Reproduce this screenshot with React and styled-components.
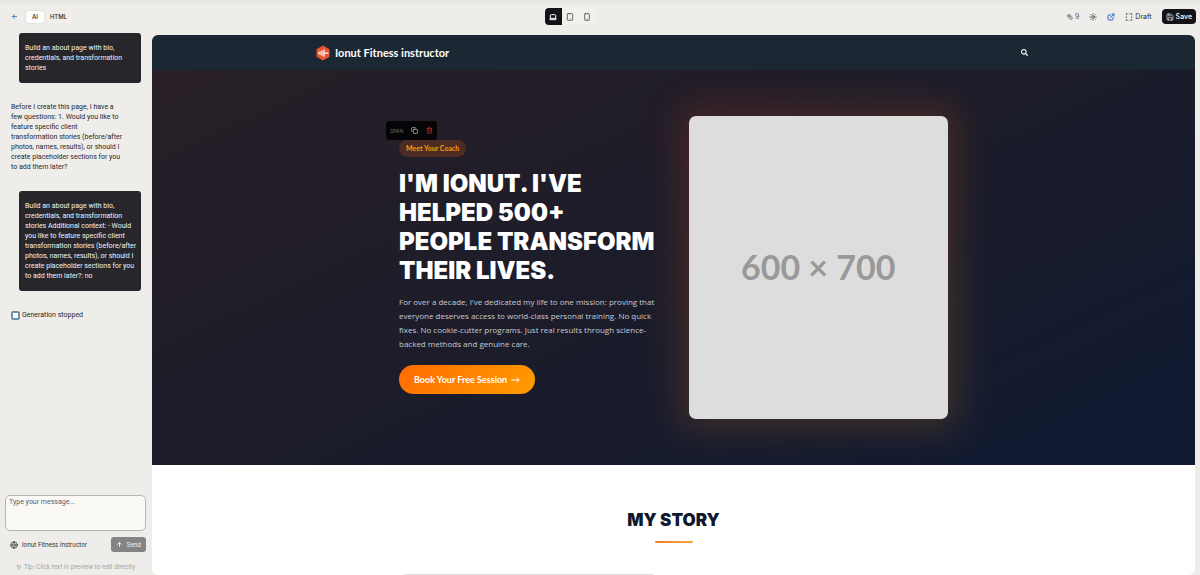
import React from 'react';
import styled, {createGlobalStyle} from 'styled-components';
import {
    ArrowLeft, ArrowUp, Laptop, Tablet, Smartphone, Coins, Sun, ExternalLink,
    Save, Copy, Trash2, Globe, MousePointer2
} from 'lucide-react';
import {FaSearch} from 'react-icons/fa';

const PLACEHOLDER = 'Type your message...';

const MESSAGES = [
    {
        own: true,
        lines: ['Build an about page with bio,', 'credentials, and transformation', 'stories']
    },
    {
        own: false,
        lines: [
            'Before I create this page, I have a',
            'few questions: 1. Would you like to',
            'feature specific client',
            'transformation stories (before/after',
            'photos, names, results), or should I',
            'create placeholder sections for you',
            'to add them later?',
        ]
    },
    {
        own: true,
        lines: [
            'Build an about page with bio,',
            'credentials, and transformation',
            'stories Additional context: - Would',
            'you like to feature specific client',
            'transformation stories (before/after',
            'photos, names, results), or should I',
            'create placeholder sections for you',
            'to add them later?: no',
        ]
    },
];

const HEADLINE = ["I'm Ionut. I've", 'helped 500+', 'people transform', 'their lives.'];

const BIO = [
    "For over a decade, I've dedicated my life to one mission: proving that",
    'everyone deserves access to world-class personal training. No quick',
    'fixes. No cookie-cutter programs. Just real results through science-',
    'backed methods and genuine care.',
];

const GlobalStyle = createGlobalStyle`
    * {
        box-sizing: border-box;
    }

    body {
        margin: 0;
        background: #eeedea;
        color: #27272a;
        font-family: Inter, sans-serif;
        font-size: 6px;
        line-height: 10px;
    }

    button, textarea {
        margin: 0;
        padding: 0;
        border: none;
        background: none;
        color: inherit;
        font: inherit;
    }

    button {
        cursor: pointer;
    }

    svg {
        display: block;
        flex: none;
    }
`;

const Page = styled.div`
    display: flex;
    flex-direction: column;
    height: 100vh;
    overflow: hidden;
    background: linear-gradient(#e4e3e0, #eeedea 6px);
`;

const Toolbar = styled.header`
    display: flex;
    align-items: center;
    justify-content: space-between;
    flex: none;
    height: 35px;
    padding: 0 4px 2px 11px;
`;

const ToolbarSide = styled.div`
    display: flex;
    align-items: center;
    gap: ${({$wide}) => $wide ? '10px' : '8px'};
`;

const IconButton = styled.button`
    display: flex;
    align-items: center;
    gap: 2px;
    color: ${({$color}) => $color || '#27272a'};
    font-size: 7px;
`;

const Tabs = styled.div`
    display: flex;
    border-radius: 3px;
    background: #f0efec;
`;

const Tab = styled.button`
    height: 12px;
    padding: 0 6px;
    border-radius: 3px;
    font-weight: 500;
    background: ${({$active}) => $active ? '#fefefd' : 'transparent'};
    box-shadow: ${({$active}) => $active ? '0 0 2px rgba(0, 0, 0, 0.15)' : 'none'};
`;

const Devices = styled.div`
    display: flex;
    overflow: hidden;
    border-radius: 4px;
    background: #f1f0ed;
`;

const Device = styled.button`
    display: grid;
    place-items: center;
    width: 17px;
    height: 17px;
    color: ${({$active}) => $active ? '#fff' : '#27272a'};
    background: ${({$active}) => $active ? '#121217' : 'transparent'};
`;

const SaveButton = styled.button`
    display: flex;
    align-items: center;
    gap: 2px;
    height: 15px;
    padding: 0 4px;
    border-radius: 4px;
    color: #fff;
    background: #121217;
    font-size: 7px;
    font-weight: 500;
`;

const Body = styled.div`
    display: flex;
    flex: 1;
    min-height: 0;
`;

const Sidebar = styled.aside`
    display: flex;
    flex-direction: column;
    flex: none;
    width: 152px;
    padding: 0 6px 3px 5px;
`;

const Messages = styled.div`
    display: flex;
    flex-direction: column;
    gap: 9px;
    flex: 1;
    margin-top: -2px;
    padding-right: 5px;
    font-family: Roboto, sans-serif;
    font-size: 7px;
`;

const Message = styled.p`
    margin: 0 ${({$own}) => $own ? '0 0 14px' : '14px 0 0'};
    padding: 10px 0 10px 6px;
    border-radius: 3px;
    color: ${({$own}) => $own ? '#f4f4f5' : '#27272a'};
    background: ${({$own}) => $own ? '#26262b' : 'transparent'};
    white-space: nowrap;
`;

const Status = styled.p`
    display: flex;
    align-items: center;
    gap: 2px;
    margin: 0;
    padding: 10px 6px;
`;

const StopMark = styled.span`
    width: 9px;
    height: 9px;
    border: 2px solid #6a8fb2;
    border-radius: 2px;
    background: #fff;
`;

const Composer = styled.form`
    display: flex;
    flex-direction: column;
    gap: 6px;
`;

const MessageInput = styled.textarea`
    display: block;
    width: 100%;
    height: 36px;
    padding: 1px 3px;
    border: 1px solid #b5b5b3;
    border-radius: 5px;
    background: #faf9f6;
    font-family: Roboto, sans-serif;
    font-size: 7px;
    resize: none;

    &::placeholder {
        color: #606067;
    }
`;

const ComposerRow = styled.div`
    display: flex;
    align-items: center;
    justify-content: space-between;
`;

const Site = styled.span`
    display: flex;
    align-items: center;
    gap: 4px;
    padding-left: 5px;
`;

const SendButton = styled.button`
    display: flex;
    align-items: center;
    gap: 3px;
    height: 15px;
    padding: 0 5px;
    border-radius: 3px;
    color: #f4f4f5;
    background: #858484;
`;

const Tip = styled.p`
    display: flex;
    align-items: center;
    justify-content: center;
    gap: 2px;
    margin: 10px 0 0;
    color: #a1a1a0;
`;

const Preview = styled.main`
    flex: 1;
    min-width: 0;
    margin-right: 5px;
    overflow: hidden;
    border-radius: 6px;
    background: #fff;
    font-family: Lato, sans-serif;
`;

const SiteHeader = styled.header`
    height: 35px;
    background: #1b2834;
`;

const SiteNav = styled.nav`
    display: flex;
    align-items: center;
    justify-content: space-between;
    max-width: 715px;
    height: 100%;
    margin: 0 auto;
    padding-right: 3px;
    color: #fff;
`;

const Brand = styled.a`
    display: flex;
    align-items: center;
    gap: 5px;
    color: #fff;
    font-size: 11px;
    font-weight: 700;
    text-decoration: none;
`;

const Hero = styled.section`
    padding: 46px 0;
    background: linear-gradient(155deg, #281f27 0%, #1c1c2a 50%, #0f1a33 100%);
`;

const HeroGrid = styled.div`
    display: grid;
    grid-template-columns: 1fr 1fr;
    align-items: center;
    gap: 30px;
    max-width: 549px;
    margin: 0 auto;
`;

const HeroText = styled.div`
    display: flex;
    flex-direction: column;
    align-items: flex-start;
    min-width: 0;
    white-space: nowrap;
`;

const BadgeWrap = styled.div`
    position: relative;
`;

const Badge = styled.span`
    display: block;
    height: 17px;
    padding: 0 7px;
    border-radius: 9px;
    color: #ff9a0d;
    background: #4d2c23;
    font-size: 7px;
    font-weight: 700;
    line-height: 17px;
`;

const ElementTools = styled.div`
    position: absolute;
    bottom: 100%;
    left: -13px;
    display: flex;
    align-items: center;
    gap: 8px;
    height: 19px;
    padding: 0 4px;
    border-radius: 3px;
    color: #6b6b70;
    background: #050507;
    font-family: Inter, sans-serif;
    font-size: 5px;
`;

const Headline = styled.h1`
    margin: 12px 0 10px;
    color: #fff;
    font-family: Inter, sans-serif;
    font-size: 24px;
    font-weight: 900;
    line-height: 29px;
    text-transform: uppercase;
`;

const Bio = styled.p`
    margin: 0 0 14px;
    color: #c5cbd6;
    font-family: "Open Sans", sans-serif;
    font-size: 8px;
    line-height: 14px;
`;

const Line = styled.span`
    display: block;
`;

const BookLink = styled.a`
    display: flex;
    align-items: center;
    gap: 4px;
    height: 29px;
    padding: 0 15px;
    border-radius: 15px;
    color: #fff;
    background: linear-gradient(135deg, #ff6b00, #ff9d00);
    font-size: 9px;
    font-weight: 700;
    text-decoration: none;
`;

const Portrait = styled.div`
    position: relative;

    &::before {
        content: '';
        position: absolute;
        inset: -10px;
        background: linear-gradient(135deg, #ff4d1a, #ff9d00);
        opacity: 0.17;
        filter: blur(18px);
    }
`;

const PortraitImage = styled.div`
    position: relative;
    display: grid;
    place-items: center;
    aspect-ratio: 6 / 7;
    border-radius: 7px;
    color: #999;
    background: #ddd;
    font-size: 34px;
    font-weight: 700;
`;

const Story = styled.section`
    display: flex;
    flex-direction: column;
    align-items: center;
    padding-top: 43px;
`;

const StoryTitle = styled.h2`
    margin: 0;
    color: #10182b;
    font-family: Inter, sans-serif;
    font-size: 17px;
    font-weight: 900;
    line-height: 24px;
    text-transform: uppercase;
`;

const Underline = styled.span`
    width: 38px;
    height: 2px;
    margin: 9px 0 31px;
    border-radius: 1px;
    background: linear-gradient(90deg, #f07a28, #f5ac38);
`;

const StoryGrid = styled.div`
    display: grid;
    grid-template-columns: 253px 1fr;
    width: 543px;
`;

const StoryImage = styled.div`
    height: 200px;
    border-radius: 4px;
    background: #ddd;
`;

const LogoMark = () => (
    <svg width="14" height="16" viewBox="0 0 28 32" aria-hidden="true">
        <path d="M14 1 27 8.500v15L14 31 1 23.500v-15Z" fill="#e8552d"/>
        <path d="M4 16h3M17 16h8" stroke="#fff" strokeWidth="2.500"/>
        <path d="M8 13.500v5M12 11.500v9M16 9.500v13" stroke="#fff" strokeWidth="2.500" strokeLinecap="round"/>
    </svg>
);

const DraftIcon = () => (
    <svg width="8" height="8" viewBox="0 0 24 24" fill="none" stroke="currentColor" strokeWidth="2" aria-hidden="true">
        <path d="M8 2H4v5M16 2h4v5M4 10v5M20 10v5M4 18v4h4M20 18v4h-4M11 2h2M11 22h2"/>
    </svg>
);

const ArrowRight = () => (
    <svg width="9" height="6" viewBox="0 0 18 12" fill="none" stroke="currentColor" strokeWidth="2" aria-hidden="true">
        <path d="M1 6h15M12 2l4 4-4 4" strokeLinecap="round" strokeLinejoin="round"/>
    </svg>
);

const TopBar = () => (
    <Toolbar>
        <ToolbarSide>
            <IconButton aria-label="Back" $color="#2f77b5"><ArrowLeft size={7} strokeWidth={3}/></IconButton>
            <Tabs>
                <Tab $active>AI</Tab>
                <Tab>HTML</Tab>
            </Tabs>
        </ToolbarSide>
        <Devices>
            <Device $active aria-label="Laptop"><Laptop size={8} strokeWidth={3}/></Device>
            <Device aria-label="Tablet"><Tablet size={8}/></Device>
            <Device aria-label="Phone"><Smartphone size={8}/></Device>
        </Devices>
        <ToolbarSide $wide>
            <IconButton $color="#66666a"><Coins size={6} strokeWidth={3}/>9</IconButton>
            <IconButton aria-label="Theme"><Sun size={8}/></IconButton>
            <IconButton aria-label="Open" $color="#2f6fc0"><ExternalLink size={8} strokeWidth={3}/></IconButton>
            <IconButton><DraftIcon/>Draft</IconButton>
            <SaveButton><Save size={8}/>Save</SaveButton>
        </ToolbarSide>
    </Toolbar>
);

const Chat = () => (
    <Sidebar>
        <Messages>
            { MESSAGES.map(({own, lines}, index) => (
                <Message $own={own} key={ index }>
                    { lines.map((line) => <Line key={ line }>{ line }</Line>) }
                </Message>
            )) }
            <Status><StopMark/>Generation stopped</Status>
        </Messages>
        <Composer onSubmit={(event) => event.preventDefault()}>
            <MessageInput aria-label="Message" placeholder={ PLACEHOLDER }/>
            <ComposerRow>
                <Site><Globe size={8}/>Ionut Fitness instructor</Site>
                <SendButton><ArrowUp size={7} strokeWidth={3}/>Send</SendButton>
            </ComposerRow>
        </Composer>
        <Tip><MousePointer2 size={6} strokeWidth={3}/>Tip: Click text in preview to edit directly</Tip>
    </Sidebar>
);

const App = () => (
    <Page>
        <GlobalStyle/>
        <TopBar/>
        <Body>
            <Chat/>
            <Preview>
                <SiteHeader>
                    <SiteNav>
                        <Brand href="#"><LogoMark/>Ionut Fitness instructor</Brand>
                        <IconButton aria-label="Search" $color="#fff"><FaSearch size={7}/></IconButton>
                    </SiteNav>
                </SiteHeader>
                <Hero>
                    <HeroGrid>
                        <HeroText>
                            <BadgeWrap>
                                <ElementTools>
                                    SPAN
                                    <IconButton aria-label="Copy" $color="#e4e4e7"><Copy size={7}/></IconButton>
                                    <IconButton aria-label="Delete" $color="#dc3434"><Trash2 size={7}/></IconButton>
                                </ElementTools>
                                <Badge>Meet Your Coach</Badge>
                            </BadgeWrap>
                            <Headline>{ HEADLINE.map((line) => <Line key={ line }>{ line }</Line>) }</Headline>
                            <Bio>{ BIO.map((line) => <Line key={ line }>{ line }</Line>) }</Bio>
                            <BookLink href="#">Book Your Free Session <ArrowRight/></BookLink>
                        </HeroText>
                        <Portrait>
                            <PortraitImage>600 × 700</PortraitImage>
                        </Portrait>
                    </HeroGrid>
                </Hero>
                <Story>
                    <StoryTitle>My Story</StoryTitle>
                    <Underline/>
                    <StoryGrid><StoryImage/></StoryGrid>
                </Story>
            </Preview>
        </Body>
    </Page>
);

export default App;
